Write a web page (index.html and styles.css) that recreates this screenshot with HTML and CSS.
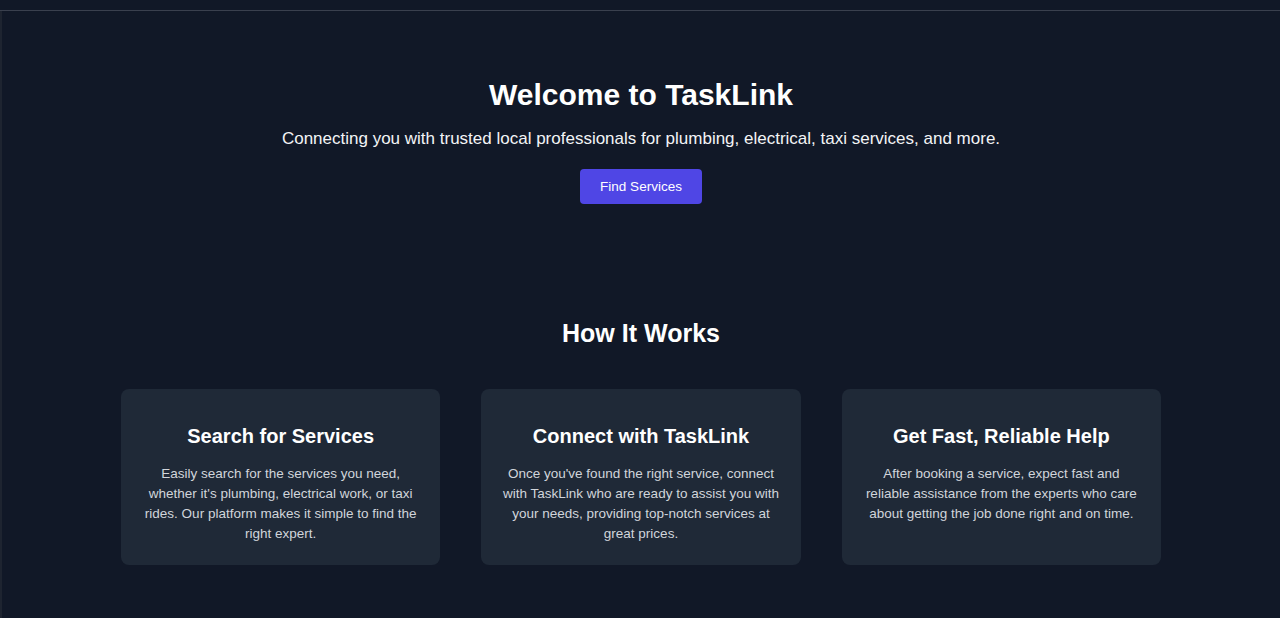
FILE: index.html
```html
<!DOCTYPE html>
<html lang="en">
<head>
<meta charset="utf-8">
<title>TaskLink</title>
<link rel="stylesheet" href="styles.css">
</head>
<body>
<div class="topbar"></div>
<main class="page">
  <section class="hero">
    <h1 class="hero-title">Welcome to TaskLink</h1>
    <p class="hero-sub">Connecting you with trusted local professionals for plumbing, electrical, taxi services, and more.</p>
    <a class="btn" href="#">Find Services</a>
  </section>
  <section class="how">
    <h2 class="how-title">How It Works</h2>
    <div class="cards">
      <div class="card">
        <h3 class="card-title">Search for Services</h3>
        <p class="card-text">Easily search for the services you need, whether it's plumbing, electrical work, or taxi rides. Our platform makes it simple to find the right expert.</p>
      </div>
      <div class="card">
        <h3 class="card-title">Connect with TaskLink</h3>
        <p class="card-text">Once you've found the right service, connect with TaskLink who are ready to assist you with your needs, providing top-notch services at great prices.</p>
      </div>
      <div class="card">
        <h3 class="card-title">Get Fast, Reliable Help</h3>
        <p class="card-text">After booking a service, expect fast and reliable assistance from the experts who care about getting the job done right and on time.</p>
      </div>
    </div>
  </section>
</main>
</body>
</html>
```
FILE: styles.css
```css
html, body {
  margin: 0;
  padding: 0;
  background: #111827;
  font-family: "Liberation Sans", Arial, sans-serif;
  color: #ffffff;
}
.topbar {
  height: 10px;
  border-bottom: 1px solid #3a404e;
}
.page {
  border-left: 2px solid #1e2430;
  min-height: 607px;
  box-sizing: border-box;
}
.hero {
  display: flex;
  flex-direction: column;
  align-items: center;
  padding-top: 66px;
}
.hero-title {
  margin: 0;
  font-size: 30px;
  line-height: 36px;
  font-weight: 700;
}
.hero-sub {
  margin: 12px 0 0;
  font-size: 17px;
  line-height: 28px;
  color: #f3f4f6;
}
.btn {
  margin-top: 16px;
  display: inline-block;
  background: #4f46e5;
  color: #ffffff;
  text-decoration: none;
  font-size: 13.5px;
  line-height: 19px;
  padding: 8px 20px;
  border-radius: 4px;
}
.how {
  padding-top: 113px;
  display: flex;
  flex-direction: column;
  align-items: center;
}
.how-title {
  margin: 0;
  font-size: 25px;
  line-height: 32px;
  font-weight: 700;
}
.cards {
  margin-top: 40px;
  width: 1040px;
  display: grid;
  grid-template-columns: repeat(3, 1fr);
  gap: 41px;
}
.card {
  background: #1f2937;
  border-radius: 8px;
  padding: 33px 20px 21px;
  text-align: center;
  min-height: 176px;
  box-sizing: border-box;
}
.card-title {
  margin: 0;
  font-size: 20px;
  line-height: 28px;
  font-weight: 700;
}
.card-text {
  margin: 14px 0 0;
  font-size: 13.5px;
  line-height: 20px;
  color: #d1d5db;
}
```
